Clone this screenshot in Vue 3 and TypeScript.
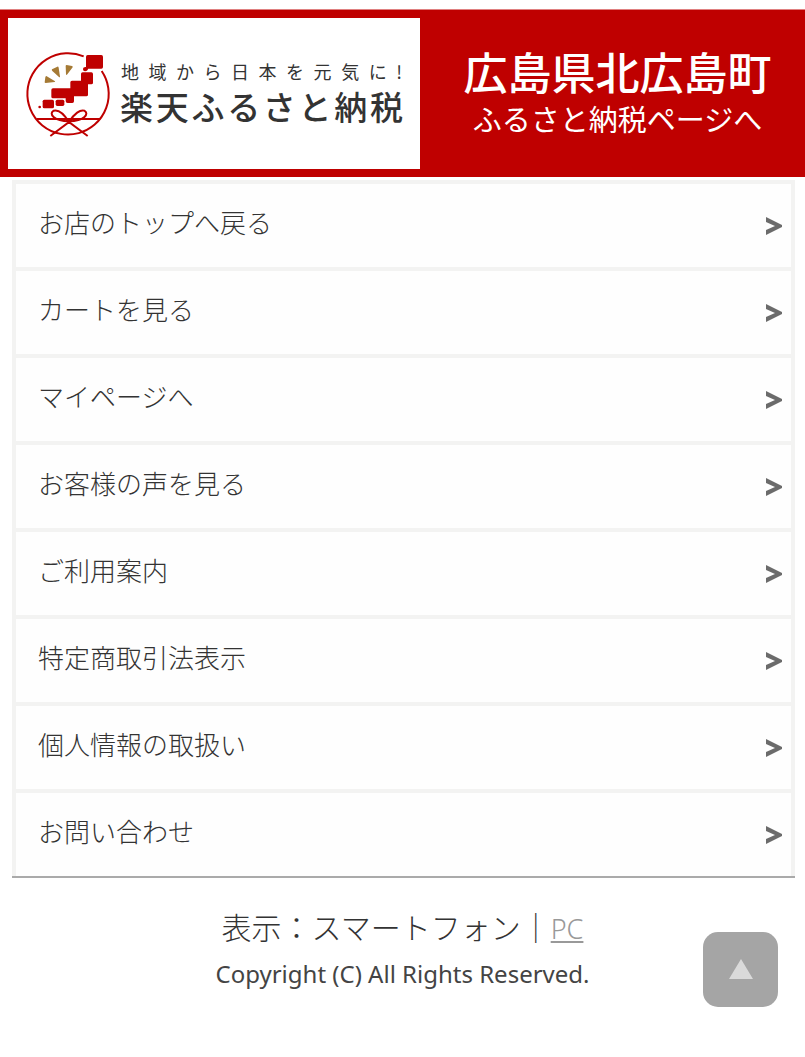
<script setup lang="ts">
interface MenuItem {
  label: string
  href: string
}

const items: MenuItem[] = [
  { label: 'お店のトップへ戻る', href: '#top' },
  { label: 'カートを見る', href: '#cart' },
  { label: 'マイページへ', href: '#mypage' },
  { label: 'お客様の声を見る', href: '#reviews' },
  { label: 'ご利用案内', href: '#guide' },
  { label: '特定商取引法表示', href: '#law' },
  { label: '個人情報の取扱い', href: '#privacy' },
  { label: 'お問い合わせ', href: '#contact' },
]

function scrollToTop(): void {
  window.scrollTo({ top: 0, behavior: 'smooth' })
}
</script>

<template>
  <div class="page">
    <a class="banner" href="#furusato">
      <span class="brand">
        <svg class="emblem" viewBox="0 0 288 288" aria-hidden="true">
          <g fill="none" stroke="#bf0000" stroke-width="6">
            <path d="M188 31A122 122 0 1 0 242 75" />
            <path d="M48 219H238" />
            <path d="M88 270L144 228C160 202 178 190 190 194C206 203 190 225 144 226C98 225 82 203 98 194C112 190 128 202 144 228L200 270" />
          </g>
          <g fill="#bf0000">
            <rect x="195" y="27" width="51" height="41" rx="5" />
            <path d="M186 70Q186 62 196 63L202 67Q200 76 192 76Q186 76 186 70Z" />
            <path d="M185 79H211Q216 79 216 84V110Q216 115 211 115H201V146Q201 151 196 151H159V166Q159 171 154 171H140Q134 171 134 165V157H96Q91 157 91 152V132Q91 127 96 127H148V109Q148 104 153 104H180V84Q180 79 185 79Z" />
            <rect x="65" y="161" width="34" height="26" rx="5" />
            <rect x="104" y="161" width="26" height="19" rx="5" />
            <circle cx="56" cy="183" r="4" />
          </g>
          <g fill="#a57a35">
            <path d="M76 90Q73 91 73 94L71 109Q71 111 74 111L101 108Q104 107 101 105Z" />
            <path d="M93 70Q91 72 94 75L114 93Q117 95 117 92L113 65Q112 61 109 62Z" />
            <path d="M137 57Q134 57 134 60L135 85Q136 89 139 85L155 64Q156 61 153 60Z" />
          </g>
        </svg>
        <span class="brand-text">
          <span class="tagline">地域から日本を元気に!</span>
          <span class="name">楽天ふるさと納税</span>
        </span>
      </span>
      <span class="town">
        <span class="town-name">広島県北広島町</span>
        <span class="town-page">ふるさと納税ページへ</span>
      </span>
    </a>

    <nav class="menu" aria-label="メニュー">
      <a v-for="item in items" :key="item.href" class="row" :href="item.href">
        <span>{{ item.label }}</span>
        <svg class="arrow" viewBox="0 0 16 20" aria-hidden="true">
          <path d="M0 1L16 9V11L0 19V14L9 10L0 6Z" fill="#6b6b6b" />
        </svg>
      </a>
    </nav>

    <footer class="footer">
      <p class="display">表示：スマートフォン｜<a class="pc" href="#pc">PC</a></p>
      <p class="copyright">Copyright (C) All Rights Reserved.</p>
    </footer>

    <button class="to-top" type="button" aria-label="ページの先頭へ" @click="scrollToTop">
      <svg class="triangle" viewBox="0 0 24 20" aria-hidden="true">
        <path d="M12 0L24 20H0Z" fill="#dadada" />
      </svg>
    </button>
  </div>
</template>

<style>
body {
  margin: 0;
  background: #fff;
}
</style>

<style scoped>
.page {
  padding-top: 9px;
  color: #444;
  font-family: "Noto Sans", "Noto Sans CJK JP", sans-serif;
}

.banner {
  display: grid;
  grid-template-columns: 412fr 369fr;
  column-gap: 8px;
  padding: 8px;
  border-top: 1px solid #e08080;
  background: #bf0000;
  color: #fff;
  font-family: "Noto Sans CJK JP", sans-serif;
  text-decoration: none;
}

.brand {
  display: flex;
  align-items: center;
  gap: 3px;
  padding: 0 17px 0 13px;
  min-height: 151px;
  background: #fff;
  color: #333;
}

.emblem {
  flex: none;
  width: 96px;
  height: 96px;
}

.brand-text {
  display: flex;
  flex: 1;
  flex-direction: column;
  padding-bottom: 4px;
}

.tagline,
.name {
  display: block;
  text-align-last: justify;
  white-space: nowrap;
}

.tagline {
  padding: 0 1px;
  font-size: 18px;
  line-height: 28px;
}

.name {
  font-size: 33px;
  font-weight: 500;
  line-height: 42px;
}

.town {
  display: flex;
  flex-direction: column;
  align-items: center;
  justify-content: center;
  padding-left: 10px;
  white-space: nowrap;
}

.town-name {
  font-size: 44px;
  font-weight: 500;
  line-height: 48px;
}

.town-page {
  font-size: 29px;
  line-height: 46px;
}

.menu {
  display: flex;
  flex-direction: column;
  gap: 4px;
  margin: 3px 10px 0 12px;
  padding: 4px 4px 0;
  border-bottom: 2px solid #aaa;
  background: #f3f3f2;
}

.row {
  display: flex;
  align-items: center;
  justify-content: space-between;
  box-sizing: border-box;
  min-height: 83px;
  padding: 0 9px 6px 22px;
  background: #fefefe;
  color: #333;
  font-size: 26px;
  font-weight: 300;
  line-height: 40px;
  text-decoration: none;
}

.arrow {
  flex: none;
  width: 16px;
  height: 20px;
  margin-top: 6px;
}

.footer {
  padding: 26px 0 48px;
  text-align: center;
}

.footer p {
  margin: 0;
}

.display {
  color: #333;
  font-size: 30px;
  font-weight: 300;
  line-height: 48px;
}

.pc {
  color: #999;
  font-size: 27px;
}

.copyright {
  font-size: 24px;
  line-height: 42px;
}

.to-top {
  position: fixed;
  right: 27px;
  bottom: 50px;
  display: flex;
  align-items: center;
  justify-content: center;
  width: 75px;
  height: 75px;
  padding: 0 0 2px;
  border: 0;
  border-radius: 15px;
  background: #a5a5a5;
  cursor: pointer;
}

.triangle {
  width: 24px;
  height: 20px;
}
</style>
